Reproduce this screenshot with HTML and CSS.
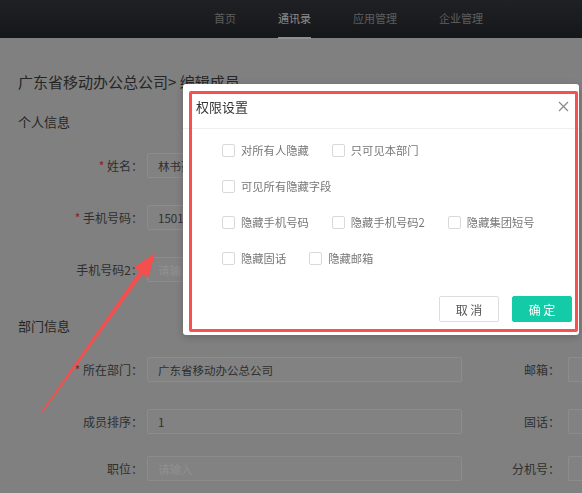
FILE: index.html
```html
<!DOCTYPE html>
<html lang="zh-CN">
  <head>
    <meta charset="UTF-8">
    <meta name="viewport" content="width=device-width, initial-scale=1.0">
    <title>编辑成员</title>
    <link rel="stylesheet" href="styles.css">
  </head>
  <body>
    <header class="topbar">
      <nav class="nav">
        <a class="nav-item" href="#">首页</a>
        <a class="nav-item active" href="#">通讯录</a>
        <a class="nav-item" href="#">应用管理</a>
        <a class="nav-item" href="#">企业管理</a>
      </nav>
    </header>

    <main class="page">
      <h1 class="crumb">广东省移动办公总公司&gt; 编辑成员</h1>

      <h2 class="section">个人信息</h2>
      <div class="row">
        <label class="lbl req">姓名：</label>
        <input class="ipt" value="林书豪">
      </div>
      <div class="row">
        <label class="lbl req">手机号码：</label>
        <input class="ipt" value="15012345678">
      </div>
      <div class="row">
        <label class="lbl">手机号码2：</label>
        <input class="ipt" placeholder="请输入">
      </div>

      <h2 class="section dept">部门信息</h2>
      <div class="row">
        <label class="lbl req">所在部门：</label>
        <input class="ipt" value="广东省移动办公总公司">
        <label class="lbl side">邮箱：</label>
        <input class="ipt cut">
      </div>
      <div class="row">
        <label class="lbl">成员排序：</label>
        <input class="ipt" value="1">
        <label class="lbl side">固话：</label>
        <input class="ipt cut">
      </div>
      <div class="row tight">
        <label class="lbl">职位：</label>
        <input class="ipt" placeholder="请输入">
        <label class="lbl side">分机号：</label>
        <input class="ipt cut">
      </div>
    </main>

    <div class="mask"></div>

    <div class="modal">
      <div class="modal-head">
        <span class="modal-title">权限设置</span>
        <svg class="close" width="11" height="11" viewBox="0 0 11 11">
          <path d="M1 1 L10 10 M10 1 L1 10" stroke="#8c8c8c" stroke-width="1.3" fill="none"/>
        </svg>
      </div>
      <div class="modal-body">
        <div class="opt-row">
          <label class="opt"><span class="box"></span>对所有人隐藏</label>
          <label class="opt"><span class="box"></span>只可见本部门</label>
        </div>
        <div class="opt-row">
          <label class="opt"><span class="box"></span>可见所有隐藏字段</label>
        </div>
        <div class="opt-row">
          <label class="opt"><span class="box"></span>隐藏手机号码</label>
          <label class="opt"><span class="box"></span>隐藏手机号码2</label>
          <label class="opt"><span class="box"></span>隐藏集团短号</label>
        </div>
        <div class="opt-row">
          <label class="opt"><span class="box"></span>隐藏固话</label>
          <label class="opt"><span class="box"></span>隐藏邮箱</label>
        </div>
      </div>
      <div class="modal-foot">
        <button class="btn btn-ghost">取 消</button>
        <button class="btn btn-primary">确 定</button>
      </div>
    </div>

    <!-- 标注：红框和箭头 -->
    <div class="mark"></div>
    <svg class="arrow" width="582" height="493" viewBox="0 0 582 493">
      <polygon fill="#f24f4e" points="41.4,411.6 139.3,271.3 133.8,267.4 155,253 148.4,277.8 142.9,273.9 42.6,412.4"/>
    </svg>
  </body>
</html>
```

FILE: styles.css
```css
html, body {
  margin: 0;
  padding: 0;
  height: 100%;
}

body {
  font-family: "Noto Sans CJK SC", sans-serif;
  background-color: #e4e4e4;
  overflow: hidden;
}

.topbar {
  height: 38px;
  display: flex;
  background: linear-gradient(#393b42, #272930);
}

.nav {
  display: flex;
  margin-left: 193px;
}

.nav-item {
  position: relative;
  padding: 0 21px;
  line-height: 37px;
  font-size: 11px;
  color: #a6a6a6;
  text-decoration: none;
}

.nav-item.active {
  color: #f5f5f5;
}

.nav-item.active::after {
  content: "";
  position: absolute;
  left: 21px;
  right: 21px;
  bottom: -1px;
  height: 2px;
  background-color: #fff;
}

.page {
  padding: 34px 0 0 18px;
}

.crumb {
  margin: 0;
  font-size: 15px;
  line-height: 20px;
  font-weight: normal;
  color: #444;
}

.section {
  margin: 21px 0 0;
  font-size: 13px;
  line-height: 18px;
  font-weight: normal;
  color: #444;
}

.section.dept {
  margin-top: 35px;
}

.row {
  display: flex;
  align-items: center;
  height: 25px;
  margin-top: 27px;
}

.section + .row {
  margin-top: 22px;
}

.row.tight {
  margin-top: 22px;
}

.lbl {
  flex-shrink: 0;
  width: 125px;
  margin-right: 4px;
  text-align: right;
  font-size: 12px;
  color: #555;
}

.lbl.side {
  width: 98px;
  margin-right: 8px;
}

.req::before {
  content: "* ";
  color: #f04134;
}

.ipt {
  flex-shrink: 0;
  width: 315px;
  height: 25px;
  padding: 0 10px;
  box-sizing: border-box;
  border: 1px solid #fafafa;
  border-radius: 2px;
  background-color: #e8e8e8;
  font-family: "Noto Sans CJK SC", sans-serif;
  font-size: 11.5px;
  color: #555;
}

/* 右栏输入框被窗口截断，只露出左边 */
.ipt.cut {
  width: 14px;
  padding: 0;
  border-right: none;
  border-radius: 2px 0 0 2px;
}

.ipt::placeholder {
  color: #fff;
}

.mask {
  position: fixed;
  top: 0;
  left: 0;
  right: 0;
  bottom: 0;
  background-color: rgba(0, 0, 0, 0.44);
}

.modal {
  position: absolute;
  left: 183px;
  top: 84px;
  width: 396px;
  height: 251px;
  display: flex;
  flex-direction: column;
  background-color: #fff;
  border-radius: 3px;
  box-shadow: 0 2px 8px rgba(0, 0, 0, 0.2);
}

.modal-head {
  height: 45px;
  box-sizing: border-box;
  display: flex;
  align-items: center;
  justify-content: space-between;
  padding: 0 10px 0 13px;
  border-bottom: 1px solid #eee;
}

.modal-title {
  font-size: 13px;
  color: #333;
}

.modal-body {
  flex: 1;
  display: flex;
  flex-direction: column;
  gap: 16px;
  padding: 11px 0 0 39px;
}

.opt-row {
  display: flex;
  align-items: center;
  gap: 23px;
  height: 20px;
}

.opt {
  display: flex;
  align-items: center;
  font-size: 11.3px;
  color: #777;
}

.box {
  width: 13px;
  height: 13px;
  margin-right: 6px;
  box-sizing: border-box;
  border: 1px solid #d9d9d9;
  border-radius: 2px;
  background-color: #fff;
}

.modal-foot {
  display: flex;
  justify-content: flex-end;
  gap: 13px;
  padding: 0 7px 13px;
}

.btn {
  width: 60px;
  height: 26px;
  border-radius: 2px;
  font-family: "Noto Sans CJK SC", sans-serif;
  font-size: 12px;
  cursor: pointer;
}

.btn-ghost {
  border: 1px solid #ddd;
  background-color: #fff;
  color: #555;
}

.btn-primary {
  border: 1px solid #13cca7;
  background-color: #13cca7;
  color: #fff;
}

.mark {
  position: absolute;
  left: 189px;
  top: 91px;
  width: 389px;
  height: 241px;
  box-sizing: border-box;
  border: 3px solid #f5514f;
  border-radius: 2px;
}

.arrow {
  position: absolute;
  left: 0;
  top: 0;
  pointer-events: none;
}
```
